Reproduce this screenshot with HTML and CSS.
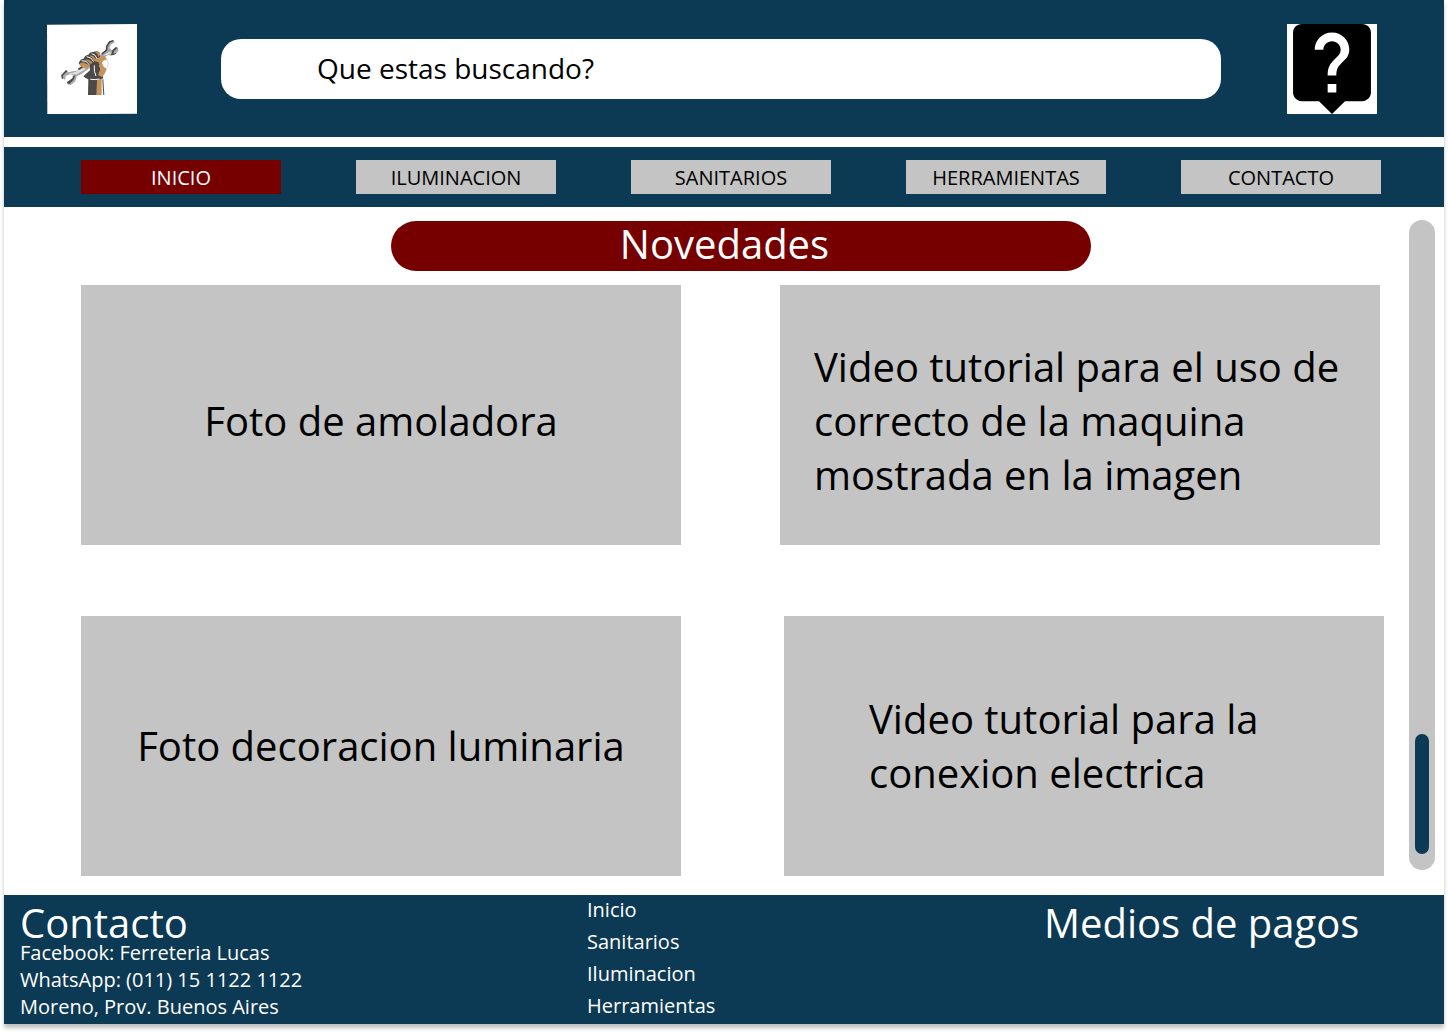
FILE: index.html
```html
<!DOCTYPE html>
<html lang="es">
<head>
<meta charset="utf-8">
<meta name="viewport" content="width=device-width, initial-scale=1">
<title>Ferreteria Lucas</title>
<link rel="stylesheet" href="styles.css">
</head>
<body>
<div class="page">
  <header class="header">
    <a class="logo" href="#" aria-label="Ferreteria Lucas">
      <svg viewBox="21 27 270 270" aria-hidden="true">
        <path fill="#fff" d="M21 29 291 27 292 296 22 298z"/>
        <!-- wrench -->
        <path fill="#a9a9ab" d="M64 180 79 165 86 172 101 168 112 167 194 110 199 92 208 80 218 76 225 82 213 88 209 99 216 106 225 97 234 98 235 107 226 118 214 122 204 120 124 177 111 183 105 200 92 210 81 207 81 201 96 190 99 181 91 178 77 182 76 194 66 190z"/>
        <path fill="#4a4a4a" d="M64 180 78 165 82 169 69 181 69 192 65 190zM113 161 129 151 134 156 119 168zM184 115 198 104 198 93 207 79 219 75 222 78 210 83 203 94 202 107 186 119zM81 202 98 190 102 181 105 183 101 194 87 208zM217 106 227 97 233 98 222 108 220 116 231 113 222 120 213 120z"/>
        <path fill="#e3e3e5" d="M84 176 105 172 132 157 137 162 110 178 98 178zM190 121 208 111 216 114 200 120z"/>
        <!-- raised fist and forearm -->
        <path fill="#4b4a49" d="M116 145Q120 131 131 131Q134 120 145 119Q150 109 160 111Q170 106 178 112L181 122 176 134 186 139 178 152 190 190 178 194 180 240H144L145 193Q136 190 130 184L150 166 150 152 139 159 124 154z"/>
        <path fill="#c6935a" d="M118 148Q125 138 139 147L148 150Q148 160 139 161Q122 158 118 148zM134 134Q148 131 158 143L152 147Q146 138 134 134zM148 122Q160 119 167 134L162 137Q158 126 148 122zM164 112Q175 106 181 119L175 125Q173 114 164 112zM160 134 180 126 192 122 202 133 190 137 186 143 190 154 200 162Q195 178 186 186L174 180 181 163 176 142 165 139zM171 195 185 191 185 240H169z"/>
        <path fill="none" stroke="#fff" stroke-width="3" d="M125 137Q139 135 149 150M140 125Q153 125 161 140M155 116Q167 118 171 131M163 151Q161 171 168 183M151 193Q167 195 178 192"/>
        <path fill="#4b4a49" d="M187 193H190L193 240H190z"/>
        <path fill="none" stroke="#999" stroke-width="1" d="M202 134Q208 143 202 156L193 170"/>
      </svg>
    </a>
    <input class="search" type="search" placeholder="Que estas buscando?" aria-label="Que estas buscando?">
    <button class="help" type="button" aria-label="Ayuda">
      <svg viewBox="1.6 2 20.8 21" preserveAspectRatio="none" aria-hidden="true">
        <path d="M19 2H5c-1.11 0-2 .9-2 2v14c0 1.1.89 2 2 2h4l3 3 3-3h4c1.1 0 2-.9 2-2V4c0-1.1-.9-2-2-2zm-6 16h-2v-2h2v2zm2.07-7.75l-.9.92C13.45 11.9 13 12.5 13 14h-2v-.5c0-1.1.45-2.1 1.17-2.83l1.24-1.26c.37-.36.59-.86.59-1.41 0-1.1-.9-2-2-2s-2 .9-2 2H8c0-2.21 1.79-4 4-4s4 1.79 4 4c0 .88-.36 1.68-.93 2.25z"/>
      </svg>
    </button>
  </header>

  <nav class="nav" aria-label="Principal">
    <a class="nav-link nav-link-active" href="#" aria-current="page">INICIO</a>
    <a class="nav-link" href="#">ILUMINACION</a>
    <a class="nav-link" href="#">SANITARIOS</a>
    <a class="nav-link" href="#">HERRAMIENTAS</a>
    <a class="nav-link" href="#">CONTACTO</a>
  </nav>

  <main class="main">
    <div class="content">
      <div class="title-bar">
        <h1 class="title">Novedades</h1>
      </div>
      <div class="row row-top">
        <div class="card card-photo"><p>Foto de amoladora</p></div>
        <div class="card card-video"><p>Video tutorial para el uso de correcto de la maquina mostrada en la imagen</p></div>
      </div>
      <div class="row row-bottom">
        <div class="card card-photo"><p>Foto decoracion luminaria</p></div>
        <div class="card card-video"><p>Video tutorial para la conexion electrica</p></div>
      </div>
    </div>
    <div class="track"><div class="thumb"></div></div>
  </main>

  <footer class="footer">
    <section class="contact">
      <h2 class="footer-title">Contacto</h2>
      <p>Facebook: Ferreteria Lucas</p>
      <p>WhatsApp: (011) 15 1122 1122</p>
      <p>Moreno, Prov. Buenos Aires</p>
    </section>
    <nav class="footer-links" aria-label="Secciones">
      <a href="#">Inicio</a>
      <a href="#">Sanitarios</a>
      <a href="#">Iluminacion</a>
      <a href="#">Herramientas</a>
    </nav>
    <section class="payments">
      <h2 class="footer-title">Medios de pagos</h2>
    </section>
  </footer>
</div>
</body>
</html>
```
FILE: styles.css
```css
* {
  box-sizing: border-box;
}

body {
  margin: 0;
  background: #fff;
  color: #000;
  font-family: "Open Sans", sans-serif;
  font-size: 20px;
  line-height: 27px;
}

h1,
h2,
p {
  margin: 0;
  font-weight: 400;
}

a {
  color: inherit;
  text-decoration: none;
}

.page {
  margin: 0 4px 8px;
  background: #fff;
  box-shadow: 0 4px 4px rgba(0, 0, 0, 0.25);
}

/* Header */
.header {
  display: flex;
  align-items: center;
  padding: 24px 67px 23px 43px;
  background: #0c3953;
}

.logo,
.help {
  flex: none;
  width: 90px;
  height: 90px;
}

.logo svg,
.help svg {
  display: block;
  width: 100%;
  height: 100%;
}

.help {
  padding: 0;
  border: 0;
  background: #fff;
}

.search {
  flex: 1;
  min-width: 0;
  height: 60px;
  margin: 0 66px 0 84px;
  padding: 0 96px 2px;
  border: 0;
  border-radius: 20px;
  background: #fff;
  appearance: none;
  font: inherit;
  font-size: 28px;
}

.search::placeholder {
  color: #000;
  opacity: 1;
}

/* Main navigation */
.nav {
  display: grid;
  grid-template-columns: repeat(5, 1fr);
  gap: 75px;
  margin-top: 10px;
  padding: 13px 63px 13px 77px;
  background: #0c3953;
}

.nav-link {
  padding: 4px 0 3px;
  background: #c4c4c4;
  text-align: center;
}

.nav-link-active {
  background: #760000;
  color: #fff;
}

/* Main content */
.main {
  display: flex;
  gap: 25px;
  padding: 13px 9px 19px 77px;
}

.content {
  flex: 1;
  min-width: 0;
}

.title-bar {
  padding: 1px 0 14px 16px;
}

.title {
  max-width: 700px;
  margin: 0 auto;
  padding: 0 32px 4px 0;
  border-radius: 25px;
  background: #760000;
  color: #fff;
  font-size: 40px;
  line-height: 46px;
  text-align: center;
}

.row {
  display: grid;
  grid-template-columns: 1fr 1fr;
}

.row-top {
  gap: 99px;
  margin-bottom: 71px;
  padding-right: 4px;
}

.row-bottom {
  gap: 103px;
}

.card {
  display: flex;
  align-items: center;
  min-height: 260px;
  background: #c4c4c4;
  font-size: 40px;
  line-height: 54px;
}

.card-photo {
  justify-content: center;
}

.row-top .card {
  padding-top: 12px;
}

.row-top .card-video {
  padding-left: 34px;
}

.row-bottom .card-video {
  padding-left: 85px;
}

.track {
  display: flex;
  flex: none;
  flex-direction: column;
  justify-content: flex-end;
  width: 26px;
  margin-bottom: 6px;
  padding: 16px 6px;
  border-radius: 13px;
  background: #c4c4c4;
}

.thumb {
  height: 120px;
  border-radius: 7px;
  background: #0c3953;
}

/* Footer */
.footer {
  display: grid;
  grid-template-columns: 567fr 457fr 400fr;
  padding-left: 16px;
  background: #0c3953;
  color: #fff;
}

.contact,
.payments {
  padding: 12px 0 4px;
}

.footer-title {
  font-size: 40px;
  line-height: 32px;
}

.footer-links {
  display: flex;
  flex-direction: column;
  align-items: flex-start;
  gap: 5px;
  padding-top: 1px;
}
```
